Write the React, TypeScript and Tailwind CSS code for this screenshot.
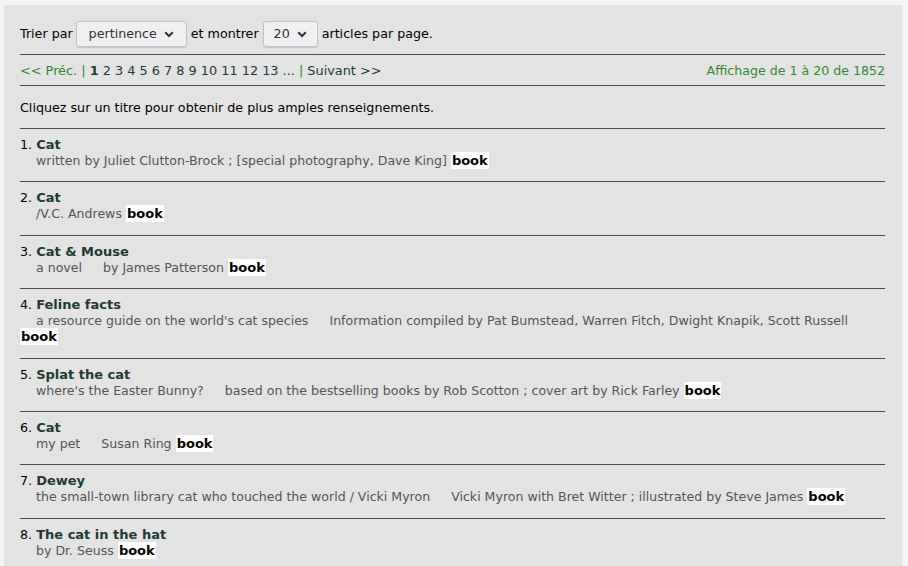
import React from "react";

interface Result {
  title: string;
  parts: string[];
}

const results: Result[] = [
  { title: "Cat", parts: ["written by Juliet Clutton-Brock ; [special photography, Dave King]"] },
  { title: "Cat", parts: ["/V.C. Andrews"] },
  { title: "Cat & Mouse", parts: ["a novel", "by James Patterson"] },
  {
    title: "Feline facts",
    parts: [
      "a resource guide on the world's cat species",
      "Information compiled by Pat Bumstead, Warren Fitch, Dwight Knapik, Scott Russell",
    ],
  },
  {
    title: "Splat the cat",
    parts: ["where's the Easter Bunny?", "based on the bestselling books by Rob Scotton ; cover art by Rick Farley"],
  },
  { title: "Cat", parts: ["my pet", "Susan Ring"] },
  {
    title: "Dewey",
    parts: [
      "the small-town library cat who touched the world / Vicki Myron",
      "Vicki Myron with Bret Witter ; illustrated by Steve James",
    ],
  },
  { title: "The cat in the hat", parts: ["by Dr. Seuss"] },
];

const Chevron = () => (
  <svg width="10" height="7" viewBox="0 0 10 7" className="ml-[7px]">
    <path d="M1.2 1.2 L5 5 L8.8 1.2" fill="none" stroke="#333" strokeWidth="2" />
  </svg>
);

const FakeSelect = ({ value, width }: { value: string; width: string }) => (
  <span
    className={`inline-flex items-center justify-center h-[26px] ${width} rounded-[3px] border border-[#c4c4c4] bg-[#f0f0f2] text-[#333] shadow-[0_1px_1px_rgba(0,0,0,0.12)]`}
  >
    {value}
    <Chevron />
  </span>
);

const pages = ["2", "3", "4", "5", "6", "7", "8", "9", "10", "11", "12", "13"];

export default function App() {
  return (
    <div
      className="min-h-[566px] bg-[#f3f3f3] pt-[5px] pl-[4px] pr-[6px] text-[12.7px] leading-4 text-black"
      style={{ fontFamily: '"DejaVu Sans", Verdana, sans-serif' }}
    >
      <div className="bg-[#e3e3e3] pl-4 pr-[17px] pt-4 min-h-[561px]">
        {/* Sort / page size */}
        <div className="flex items-center h-[26px] mb-[7px] whitespace-nowrap">
          <span>Trier par</span>
          <span className="ml-[3px]">
            <FakeSelect value="pertinence" width="w-[111px]" />
          </span>
          <span className="ml-[4px]">et montrer</span>
          <span className="ml-[4px]">
            <FakeSelect value="20" width="w-[55px]" />
          </span>
          <span className="ml-[4px]">articles par page.</span>
        </div>

        {/* Pagination */}
        <div className="flex justify-between border-t border-b border-[#4a4a4a] pt-[8px] pb-[6px]">
          <div className="text-[12.85px]">
            <span className="text-[#2e8b2e]">&lt;&lt; Préc. |</span>{" "}
            <span className="font-bold text-[#1d3a33]">1</span>{" "}
            {pages.map((p) => (
              <span key={p} className="text-[#1d3a33]">
                {p}{" "}
              </span>
            ))}
            <span className="text-[#1d3a33]">...</span>{" "}
            <span className="text-[#2e8b2e]">|</span>{" "}
            <span className="text-[#1d3a33]">Suivant &gt;&gt;</span>
          </div>
          <div className="text-[#2e8b2e] text-[12.6px]">Affichage de 1 à 20 de 1852</div>
        </div>

        <div className="pt-[14px] pb-[12px]">
          Cliquez sur un titre pour obtenir de plus amples renseignements.
        </div>

        {/* Results */}
        {results.map((r, i) => (
          <div key={i} className="border-t border-[#4a4a4a] pt-[8px] pb-[12.4px]">
            <div>
              {i + 1}.{" "}
              <span className="font-bold text-[13px] text-[#1d3a33]">{r.title}</span>
            </div>
            <div>
              <span className="ml-4 text-[#555] text-[12.57px]">
                {r.parts.map((part, j) => (
                  <span key={j} className={j > 0 ? "ml-[21px]" : ""}>
                    {part}
                  </span>
                ))}
              </span>{" "}
              <span className="bg-white font-bold text-[13px] px-[1px] py-[1px]">book</span>
            </div>
          </div>
        ))}
      </div>
    </div>
  );
}
